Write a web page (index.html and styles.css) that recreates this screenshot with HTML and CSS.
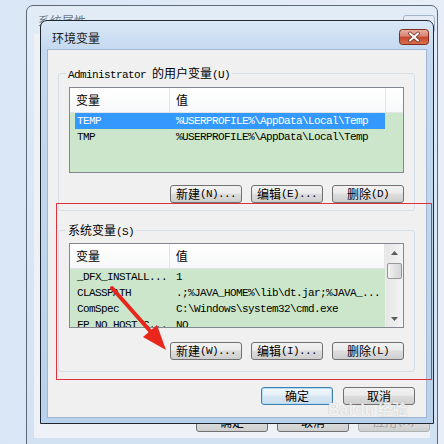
FILE: index.html
```html
<!DOCTYPE html>
<html>
<head>
    <meta charset="UTF-8">
    <meta name="viewport" content="width=device-width, initial-scale=1.0">
    <title>环境变量</title>
    <link rel="stylesheet" href="styles.css">
</head>
<body>
<!-- System properties window behind the dialog -->
<div class="back-window">
    <div class="back-titlebar">
        <span class="back-title">系统属性</span>
        <span class="back-close"></span>
    </div>
    <div class="back-client">
        <div class="back-buttons">
            <button class="btn">确定</button>
            <button class="btn">取消</button>
            <button class="btn" disabled>应用<span class="en">(A)</span></button>
        </div>
    </div>
</div>

<div class="dialog">
    <div class="titlebar">
        <span class="title">环境变量</span>
        <button class="close">
            <svg width="30" height="16" viewBox="0 0 30 16">
                <defs>
                    <linearGradient id="closeGrad" x1="0" y1="0" x2="0" y2="1">
                        <stop offset="0" stop-color="#eab1a3"/>
                        <stop offset="0.45" stop-color="#d98470"/>
                        <stop offset="0.5" stop-color="#c5472f"/>
                        <stop offset="1" stop-color="#d8734f"/>
                    </linearGradient>
                </defs>
                <rect x="0.5" y="0.5" width="29" height="15" rx="3" fill="url(#closeGrad)" stroke="#7e2a1c"/>
                <path d="M11 4.5 L19 11.5 M19 4.5 L11 11.5" stroke="#6a2418" stroke-width="3.6" stroke-linecap="round"/>
                <path d="M11 4.5 L19 11.5 M19 4.5 L11 11.5" stroke="#ffffff" stroke-width="2.2" stroke-linecap="round"/>
            </svg>
        </button>
    </div>

    <div class="client">
        <div class="group group-user">
            <div class="group-label"><span class="en">Administrator </span>的用户变量<span class="en">(U)</span></div>
            <div class="list list-user">
                <div class="list-header">
                    <div class="col col-name">变量</div>
                    <div class="col col-value">值</div>
                </div>
                <div class="list-rows">
                    <div class="row selected">
                        <span class="cell cell-name">TEMP</span>
                        <span class="cell cell-value">%USERPROFILE%\AppData\Local\Temp</span>
                    </div>
                    <div class="row">
                        <span class="cell cell-name">TMP</span>
                        <span class="cell cell-value">%USERPROFILE%\AppData\Local\Temp</span>
                    </div>
                </div>
            </div>
            <div class="group-buttons">
                <button class="btn">新建<span class="en">(N)...</span></button>
                <button class="btn">编辑<span class="en">(E)...</span></button>
                <button class="btn">删除<span class="en">(D)</span></button>
            </div>
        </div>

        <div class="group group-system">
            <div class="group-label">系统变量<span class="en">(S)</span></div>
            <div class="list list-system">
                <div class="list-main">
                    <div class="list-header">
                        <div class="col col-name">变量</div>
                        <div class="col col-value">值</div>
                    </div>
                    <div class="list-rows">
                        <div class="row">
                            <span class="cell cell-name">_DFX_INSTALL...</span>
                            <span class="cell cell-value">1</span>
                        </div>
                        <div class="row">
                            <span class="cell cell-name">CLASSPATH</span>
                            <span class="cell cell-value">.;%JAVA_HOME%\lib\dt.jar;%JAVA_...</span>
                        </div>
                        <div class="row">
                            <span class="cell cell-name">ComSpec</span>
                            <span class="cell cell-value">C:\Windows\system32\cmd.exe</span>
                        </div>
                        <div class="row">
                            <span class="cell cell-name">FP_NO_HOST_C...</span>
                            <span class="cell cell-value">NO</span>
                        </div>
                    </div>
                </div>
                <div class="scrollbar">
                    <div class="scroll-btn">
                        <svg width="7" height="4" viewBox="0 0 7 4"><path d="M0 4 L3.5 0 L7 4 Z" fill="#5c5c5c"/></svg>
                    </div>
                    <div class="scroll-track">
                        <div class="scroll-thumb"></div>
                    </div>
                    <div class="scroll-btn">
                        <svg width="7" height="4" viewBox="0 0 7 4"><path d="M0 0 L3.5 4 L7 0 Z" fill="#5c5c5c"/></svg>
                    </div>
                </div>
            </div>
            <div class="group-buttons">
                <button class="btn">新建<span class="en">(W)...</span></button>
                <button class="btn">编辑<span class="en">(I)...</span></button>
                <button class="btn">删除<span class="en">(L)</span></button>
            </div>
        </div>

        <div class="dialog-buttons">
            <button class="btn btn-default">确定</button>
            <button class="btn">取消</button>
        </div>
    </div>
</div>

<!-- annotation overlays -->
<div class="highlight"></div>
<svg class="arrow" width="444" height="444" viewBox="0 0 444 444">
    <line x1="112" y1="288" x2="151" y2="332" stroke="#e8261c" stroke-width="4" stroke-linecap="round"/>
    <polygon points="166,350 143,337 157,325" fill="#e8261c"/>
</svg>
<div class="watermark">
    <span class="wm-bai">Bai</span><span class="wm-du">du</span><span class="wm-jy">经验</span>
</div>
</body>
</html>
```

FILE: styles.css
```css
body {
    margin: 0;
    width: 444px;
    height: 444px;
    overflow: hidden;
    position: relative;
    font-family: "Noto Sans CJK SC", "Liberation Sans", sans-serif;
    font-size: 12px;
    color: #000;
    background: linear-gradient(to right, #d9e6f5, #e7eef8);
}

.en,
.cell {
    font-family: "Liberation Mono", "Noto Sans CJK SC", monospace;
    font-size: 11px;
    letter-spacing: -0.6px;
}

/* back window */
.back-window {
    position: absolute;
    left: 26px;
    top: 5px;
    width: 412px;
    height: 450px;
    box-sizing: border-box;
    border: 1px solid #5d6878;
    border-radius: 7px 7px 0 0;
    background: linear-gradient(to bottom, #e2ecf7, #d2e1f2);
    padding: 0 7px;
    display: flex;
    flex-direction: column;
}

.back-titlebar {
    height: 28px;
    display: flex;
    align-items: flex-start;
}

.back-title {
    margin: 8px 0 0 4px;
    color: #6d7886;
    line-height: 14px;
}

.back-close {
    margin: 9px -5px 0 auto;
    width: 30px;
    height: 16px;
    border: 1px solid #a3b3c6;
    border-radius: 3px;
    background: #e4ecf5;
}

.back-client {
    height: 404px;
    background: #eef2f6;
    display: flex;
    flex-direction: column;
    justify-content: flex-end;
    padding-bottom: 6px;
    box-sizing: border-box;
}

.back-buttons {
    display: flex;
    justify-content: flex-end;
    gap: 9px;
}

.back-buttons .btn {
    height: 20px;
}

/* dialog */
.dialog {
    position: absolute;
    left: 40px;
    top: 20px;
    width: 394px;
    height: 404px;
    box-sizing: border-box;
    border: 1px solid #1e2631;
    border-radius: 7px 7px 0 0;
    padding: 0 7px 6px 7px;
    background: linear-gradient(to bottom, #dae8f7 0, #c4d9f0 28px, #b9d2ec 100%);
    display: flex;
    flex-direction: column;
}

.titlebar {
    height: 29px;
    display: flex;
    align-items: flex-start;
}

.title {
    margin: 10px 0 0 4px;
    line-height: 14px;
    font-size: 12px;
    color: #1a1a1a;
}

.close {
    margin: 8px -3px 0 auto;
    padding: 0;
    border: none;
    background: none;
    width: 30px;
    height: 16px;
    display: block;
}

.close svg {
    display: block;
}

.client {
    flex: 1;
    background: #f0f0f0;
    box-shadow: 0 0 0 1px #9fb7d3;
    padding: 23px 0 0 10px;
    display: flex;
    flex-direction: column;
}

/* group boxes */
.group {
    width: 357px;
    box-sizing: border-box;
    border: 1px solid #d5dfe5;
    border-radius: 3px;
    padding: 0 10px;
    display: flex;
    flex-direction: column;
}

.group-user {
    height: 138px;
}

.group-system {
    height: 142px;
    margin-top: 19px;
}

.group-label {
    align-self: flex-start;
    margin: -8px 0 0 -3px;
    padding: 0 2px;
    height: 14px;
    line-height: 14px;
    background: #f0f0f0;
    white-space: nowrap;
}

.group-buttons {
    display: flex;
    justify-content: flex-end;
    gap: 9px;
}

.group-user .group-buttons {
    margin-top: 12px;
}

.group-system .group-buttons {
    margin-top: 14px;
}

/* list views */
.list {
    box-sizing: border-box;
    border: 1px solid #828790;
    background: #cbe6cb;
    overflow: hidden;
}

.list-user {
    margin-top: 7px;
    height: 86px;
}

.list-system {
    margin-top: 6px;
    height: 85px;
    display: flex;
}

.list-main {
    flex: 1;
    overflow: hidden;
}

.list-header {
    height: 24px;
    border-bottom: 1px solid #e2e3e5;
    background: linear-gradient(to bottom, #ffffff, #f7f8f9);
    display: flex;
}

.col {
    line-height: 24px;
    padding-left: 6px;
    box-sizing: border-box;
    border-right: 1px solid #e5e5e5;
}

.col-name {
    width: 100px;
}

.col-value {
    width: 216px;
}

.list-rows {
    padding-left: 5px;
}

.row {
    width: 310px;
    height: 16px;
    line-height: 16px;
    display: flex;
    white-space: nowrap;
}

.row.selected {
    background: #3399ff;
    color: #fff;
}

.cell {
    overflow: hidden;
}

.cell-name {
    width: 94px;
    padding-left: 2px;
    box-sizing: border-box;
}

.cell-value {
    flex: 1;
    padding-left: 7px;
}

/* scrollbar */
.scrollbar {
    width: 17px;
    display: flex;
    flex-direction: column;
    background: linear-gradient(to right, #e6e6e6, #f4f4f4);
    border-left: 1px solid #ececec;
}

.scroll-btn {
    height: 17px;
    display: flex;
    align-items: center;
    justify-content: center;
}

.scroll-track {
    flex: 1;
    padding-top: 2px;
}

.scroll-thumb {
    height: 16px;
    margin: 0 1px;
    border: 1px solid #979797;
    border-radius: 2px;
    box-sizing: border-box;
    background: linear-gradient(to right, #f4f4f4, #e2e2e2 50%, #d6d6d6);
}

/* buttons */
.btn {
    width: 72px;
    height: 18px;
    padding: 0;
    border: 1px solid #707070;
    border-radius: 3px;
    background: linear-gradient(to bottom, #f2f2f2 0%, #ebebeb 45%, #dddddd 50%, #cfcfcf 100%);
    font-family: "Noto Sans CJK SC", "Liberation Sans", sans-serif;
    font-size: 12px;
    line-height: 14px;
    color: #000;
    display: flex;
    align-items: center;
    justify-content: center;
    white-space: nowrap;
}

.btn:disabled {
    color: #a0a0a0;
    border-color: #adb2b5;
}

.btn-default {
    border-color: #3c7fb1;
    box-shadow: inset 0 0 0 1px #b6dcf4;
    background: linear-gradient(to bottom, #f2f8fc 0%, #e5eff7 45%, #d6e6f2 50%, #cbdff0 100%);
}

.dialog-buttons {
    width: 357px;
    margin-top: 15px;
    display: flex;
    justify-content: flex-end;
    gap: 10px;
}

/* annotations */
.highlight {
    position: absolute;
    left: 56px;
    top: 203px;
    width: 376px;
    height: 177px;
    box-sizing: border-box;
    border: 1px solid #e0323a;
}

.arrow {
    position: absolute;
    left: 0;
    top: 0;
    pointer-events: none;
}

.watermark {
    position: absolute;
    left: 328px;
    top: 398px;
    display: flex;
    align-items: baseline;
    font-family: "Liberation Sans", "Noto Sans CJK SC", sans-serif;
    font-weight: bold;
    color: rgba(255, 255, 255, 0.85);
    text-shadow: 0 0 1px rgba(120, 120, 120, 0.6);
}

.wm-bai {
    font-size: 16px;
}

.wm-du {
    font-size: 16px;
    margin-left: 2px;
}

.wm-jy {
    font-family: "Noto Sans CJK SC", sans-serif;
    font-size: 15px;
    margin-left: 3px;
}
```
